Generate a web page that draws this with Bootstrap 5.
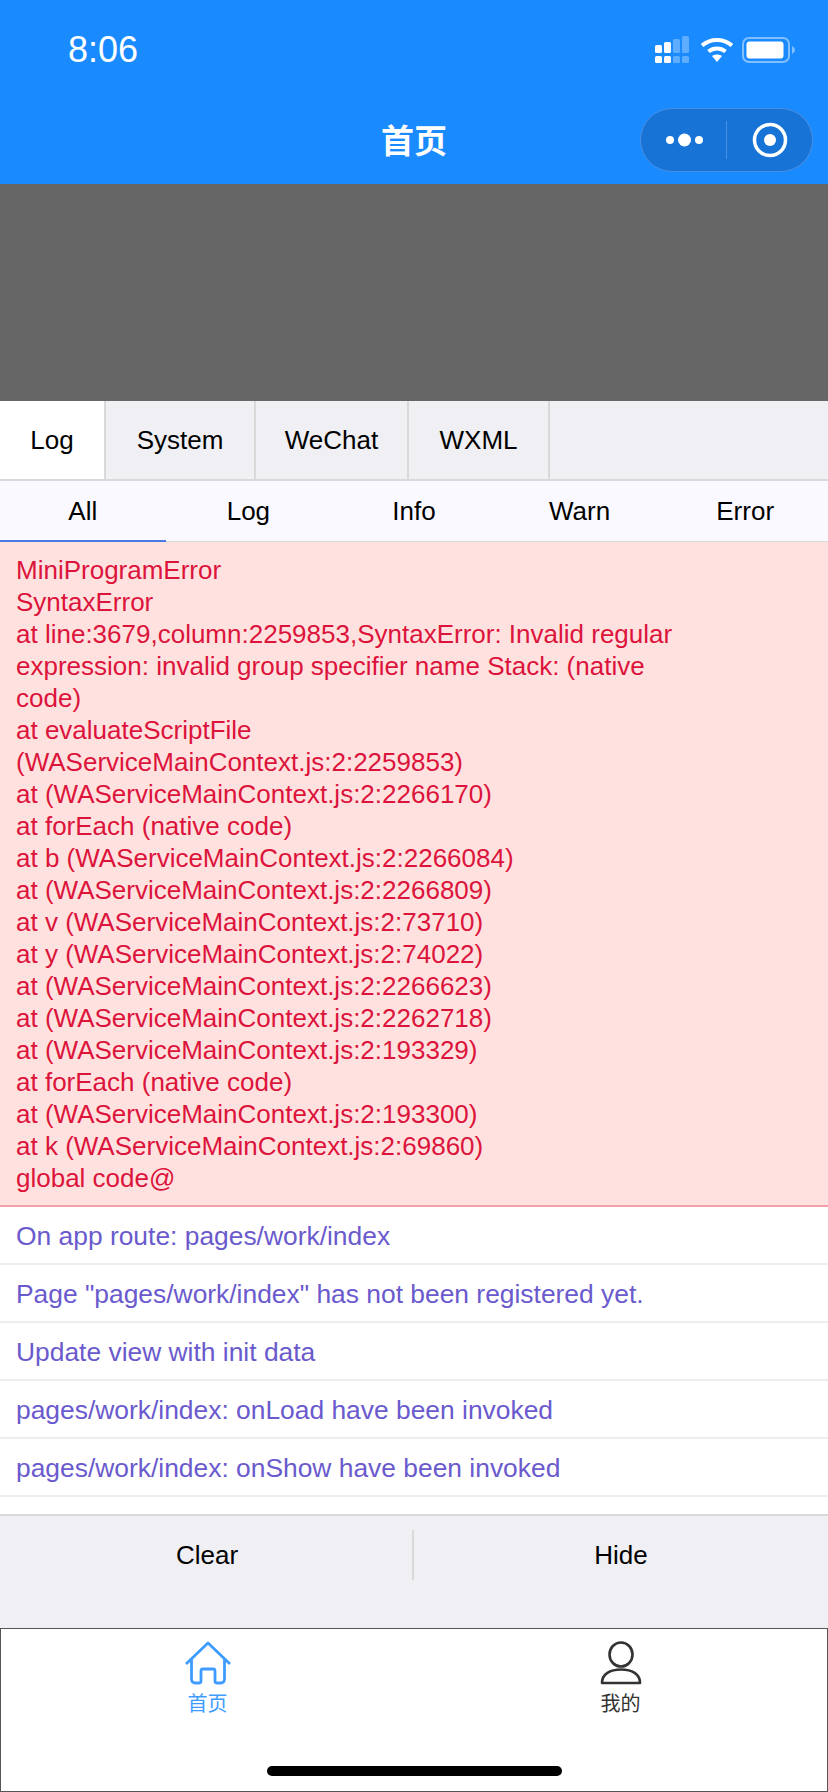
<!DOCTYPE html>
<html lang="zh">
<head>
<meta charset="utf-8">
<title>首页</title>
<link rel="stylesheet" href="https://cdn.jsdelivr.net/npm/bootstrap@5.3.0/dist/css/bootstrap.min.css">
<style>
html,body{margin:0;padding:0;background:#fff}
body{width:828px;height:1792px;overflow:hidden;font-family:"Liberation Sans","Noto Sans CJK SC",sans-serif;color:#000}
.shell{height:1792px}
.topbar{height:184px;background:#1a8aff;color:#fff}
.statusline{height:92px;padding:7px 32px 0 68px}
.clock{font-size:36px;line-height:1}
.wifiglyph{margin-left:12px}
.battglyph{margin-left:9px}
.titleline{height:92px;padding-right:15px}
.pagetitle{left:0;right:0;top:23px;font-size:33px;font-weight:700;line-height:48px;font-family:"Noto Sans CJK SC",sans-serif}
.capsule{width:173px;height:64px;border-radius:32px;background:#1873d6;border:1px solid #4a8fe0;margin-top:16px}
.capsule-half{width:86px;height:100%}
.capsule-half.dotside{padding-left:3px}
.capsule-sep{width:1px;height:38px;background:#4a8fe0}
.stage{height:217px;background:#666}
.tabrow{height:80px;background:#efeff4;border-bottom:2px solid #d9d9d9}
.tabcell{font-size:26px;line-height:78px;text-align:center;border-right:2px solid #d9d9d9}
.tw-a{width:106px}.tw-b{width:150px}.tw-c{width:153px}.tw-d{width:141px}
.tabcell.onn{background:#fff}
.filterrow{height:61px;background:#f9f9ff;border-bottom:1px solid #d9d9d9}
.filtercell{width:20%;font-size:26px;line-height:61px;text-align:center;height:61px}
.filtercell.onn{border-bottom:2px solid #4a7be0}
.errbox{background:#ffe2df;color:#dc143c;font-size:26px;line-height:32px;padding:12px 142px 0 16px;border-bottom:2px solid #f4a0ab;height:665px}
.logs{height:307px;background:#fff}
.logline{color:#6a5acd;font-size:26.4px;line-height:32px;padding:13px 16px 11px;height:58px;border-bottom:2px solid #eee}
.actions{height:114px;background:#efeff4;border-top:2px solid #d9d9d9}
.actioncell{width:50%;height:50px;font-size:26px;line-height:50px;text-align:center;margin-top:14px}
.actioncell+.actioncell{width:calc(50% + 2px);margin-left:-2px;border-left:2px solid #d9d9d9}
.tabbar{height:164px;border:1px solid #555;background:#fff}
.tabitem{width:50%;padding-top:12px;font-size:20px;line-height:26px;font-family:"Noto Sans CJK SC",sans-serif;color:#333}
.tabitem.onn{color:#3f9cff}
.tabglyph{margin-bottom:5px}
.homebar{left:266px;bottom:15px;width:295px;height:10px;border-radius:5px;background:#000}
</style>
</head>
<body>
<div class="shell d-flex flex-column">
  <div class="topbar">
    <div class="statusline d-flex justify-content-between align-items-center">
      <span class="clock">8:06</span>
      <span class="d-flex align-items-center">
        <svg width="34" height="27" viewBox="0 0 34 27" fill="#fff"><rect x="0" y="9" width="7" height="8" rx="1.500"/><rect x="9" y="6" width="7" height="11" rx="1.500"/><rect x="18" y="3" width="7" height="14" rx="1.500" opacity=".3"/><rect x="27" y="0" width="7" height="17" rx="1.500" opacity=".3"/><rect x="0" y="20" width="7" height="7" rx="1.500"/><rect x="9" y="20" width="7" height="7" rx="1.500"/><rect x="18" y="20" width="7" height="7" rx="1.500" opacity=".3"/><rect x="27" y="20" width="7" height="7" rx="1.500" opacity=".3"/></svg>
        <svg class="wifiglyph" width="32" height="25" viewBox="0 0 32 25" fill="none" stroke="#fff" stroke-width="4"><path d="M1 8.500C9.500 1 22.500 1 31 8.500"/><path d="M7.500 14.500C12.500 10.500 19.500 10.500 24.500 14.500"/><path d="M11 19L16 25L21 19C18 17 14 17 11 19Z" fill="#fff" stroke="none"/></svg>
        <svg class="battglyph" width="54" height="26" viewBox="0 0 54 26"><rect x="1" y="1" width="46" height="24" rx="6" fill="none" stroke="#fff" stroke-opacity=".45" stroke-width="2"/><rect x="4.500" y="4.500" width="37" height="17" rx="3" fill="#fff"/><path d="M50 9C52 10 53 12 53 13C53 14 52 16 50 17Z" fill="#fff" fill-opacity=".45"/></svg>
      </span>
    </div>
    <div class="titleline position-relative d-flex justify-content-end">
      <div class="pagetitle position-absolute text-center">首页</div>
      <div class="capsule d-flex align-items-center">
        <div class="capsule-half dotside d-flex align-items-center justify-content-center">
          <svg width="38" height="14" viewBox="0 0 38 14" fill="#fff"><circle cx="4" cy="7" r="4"/><circle cx="18.500" cy="7" r="6.500"/><circle cx="33" cy="7" r="4"/></svg>
        </div>
        <div class="capsule-sep"></div>
        <div class="capsule-half d-flex align-items-center justify-content-center">
          <svg width="36" height="36" viewBox="0 0 36 36"><circle cx="18" cy="18" r="15.500" fill="none" stroke="#fff" stroke-width="3.500"/><circle cx="18" cy="18" r="6" fill="#fff"/></svg>
        </div>
      </div>
    </div>
  </div>
  <div class="stage"></div>
  <div class="tabrow d-flex">
    <div class="tabcell tw-a onn">Log</div><div class="tabcell tw-b">System</div><div class="tabcell tw-c">WeChat</div><div class="tabcell tw-d">WXML</div>
  </div>
  <div class="filterrow d-flex">
    <div class="filtercell onn">All</div><div class="filtercell">Log</div><div class="filtercell">Info</div><div class="filtercell">Warn</div><div class="filtercell">Error</div>
  </div>
  <div class="errbox">MiniProgramError<br>SyntaxError<br>at line:3679,column:2259853,SyntaxError: Invalid regular expression: invalid group specifier name Stack: (native code)<br>at evaluateScriptFile (WAServiceMainContext.js:2:2259853)<br>at (WAServiceMainContext.js:2:2266170)<br>at forEach (native code)<br>at b (WAServiceMainContext.js:2:2266084)<br>at (WAServiceMainContext.js:2:2266809)<br>at v (WAServiceMainContext.js:2:73710)<br>at y (WAServiceMainContext.js:2:74022)<br>at (WAServiceMainContext.js:2:2266623)<br>at (WAServiceMainContext.js:2:2262718)<br>at (WAServiceMainContext.js:2:193329)<br>at forEach (native code)<br>at (WAServiceMainContext.js:2:193300)<br>at k (WAServiceMainContext.js:2:69860)<br>global code@</div>
  <div class="logs">
    <div class="logline">On app route: pages/work/index</div>
    <div class="logline">Page "pages/work/index" has not been registered yet.</div>
    <div class="logline">Update view with init data</div>
    <div class="logline">pages/work/index: onLoad have been invoked</div>
    <div class="logline">pages/work/index: onShow have been invoked</div>
  </div>
  <div class="actions d-flex align-items-start">
    <div class="actioncell">Clear</div><div class="actioncell">Hide</div>
  </div>
  <div class="tabbar d-flex position-relative">
    <div class="tabitem onn d-flex flex-column align-items-center">
      <svg class="tabglyph" width="46" height="44" viewBox="0 0 46 44" fill="none" stroke="#3f9cff" stroke-width="2.800" stroke-linejoin="round"><path d="M1 23L23 2L45 23"/><path d="M6.500 18V38C6.500 40.500 8 42 10.500 42H14C15.500 42 16 41 16 40V30C16 28.500 16.500 28 18 28H28C29.500 28 30 28.500 30 30V40C30 41 30.500 42 32 42H35.500C38 42 39.500 40.500 39.500 38V18"/></svg>
      <span>首页</span>
    </div>
    <div class="tabitem d-flex flex-column align-items-center">
      <svg class="tabglyph" width="42" height="44" viewBox="0 0 42 44" fill="none" stroke="#333" stroke-width="2.600"><ellipse cx="21" cy="13.500" rx="11.500" ry="12"/><path d="M2 42C2 33 10 28.500 21 28.500C32 28.500 40 33 40 42Z" stroke-linejoin="round"/></svg>
      <span>我的</span>
    </div>
    <div class="homebar position-absolute"></div>
  </div>
</div>
<script src="https://cdn.jsdelivr.net/npm/bootstrap@5.3.0/dist/js/bootstrap.bundle.min.js"></script>
</body>
</html>
